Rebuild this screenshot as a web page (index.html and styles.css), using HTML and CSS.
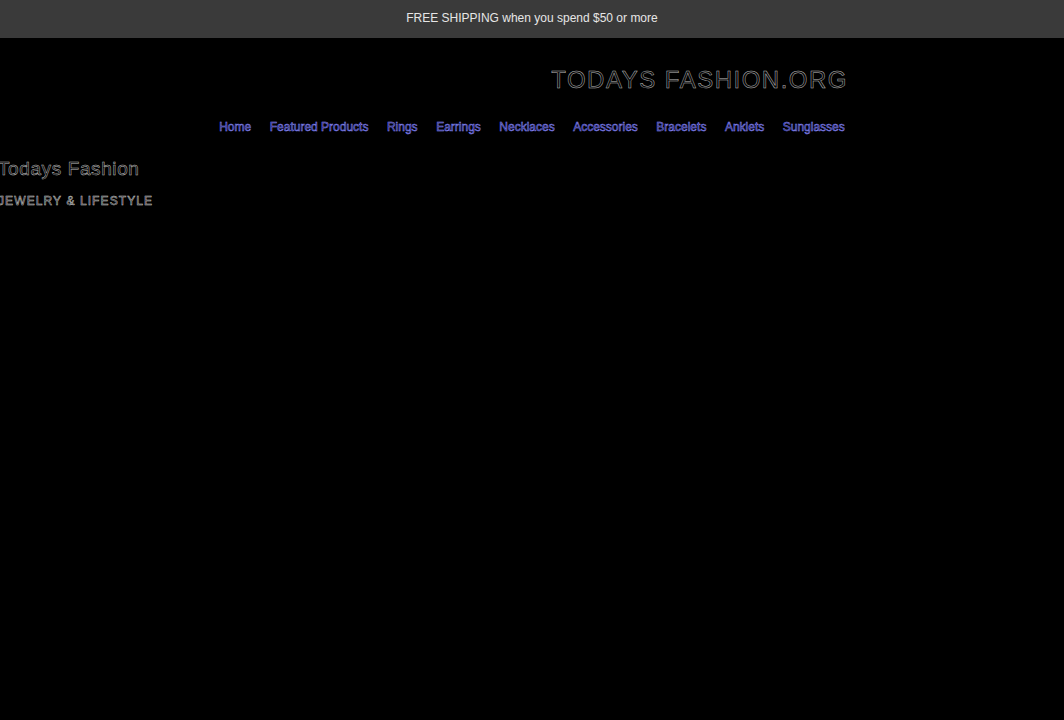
FILE: index.html
```html
<!DOCTYPE html>
<html>
<head>
<meta charset="utf-8">
<link rel="stylesheet" href="styles.css">
</head>
<body>
<div class="announce">FREE SHIPPING when you spend $50 or more</div>
<header class="header">
  <div class="header-inner">
    <div class="logo">TODAYS FASHION.ORG</div>
    <nav class="nav">
      <a href="#">Home</a>
      <a href="#">Featured Products</a>
      <a href="#">Rings</a>
      <a href="#">Earrings</a>
      <a href="#">Necklaces</a>
      <a href="#">Accessories</a>
      <a href="#">Bracelets</a>
      <a href="#">Anklets</a>
      <a href="#">Sunglasses</a>
    </nav>
  </div>
</header>
<section class="intro">
  <h1 class="intro-title">Todays Fashion</h1>
  <p class="intro-sub">JEWELRY &amp; LIFESTYLE</p>
</section>
</body>
</html>
```
FILE: styles.css
```css
html, body {
  margin: 0;
  padding: 0;
  background: #000;
  height: 100%;
}
body {
  font-family: "Liberation Sans", Arial, sans-serif;
  color: #ddd;
}
.announce {
  background: #3a3a3a;
  color: #e6e6e6;
  font-size: 12px;
  height: 38px;
  padding-bottom: 2px;
  box-sizing: border-box;
  display: flex;
  align-items: center;
  justify-content: center;
}
.header-inner {
  width: 640px;
  margin: 0 auto;
  display: flex;
  flex-direction: column;
}
.logo {
  align-self: flex-end;
  margin-top: 28px;
  margin-right: 4px;
  font-size: 24px;
  letter-spacing: 1.5px;
  line-height: 28px;
  color: #050505;
  -webkit-text-stroke: 0.5px #bbb;
  white-space: nowrap;
}
.nav {
  display: flex;
  justify-content: center;
  gap: 18.5px;
  margin-top: 26px;
  font-size: 12px;
  white-space: nowrap;
}
.nav a {
  color: #151540;
  -webkit-text-stroke: 0.5px #8a8aff;
  text-decoration: none;
}
.intro {
  margin-left: -2px;
  margin-top: 23px;
}
.intro-title {
  margin: 0;
  font-weight: normal;
  font-size: 19px;
  line-height: 24px;
  letter-spacing: 0.6px;
  color: #050505;
  -webkit-text-stroke: 0.5px #bbb;
}
.intro-sub {
  margin: 13px 0 0 0;
  font-size: 12px;
  letter-spacing: 1.1px;
  color: #050505;
  -webkit-text-stroke: 0.5px #ccc;
}
```
